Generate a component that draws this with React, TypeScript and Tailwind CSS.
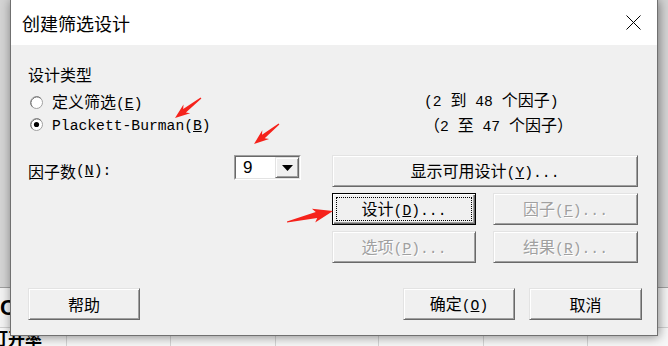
import React from "react";

function M({ children }: { children: React.ReactNode }) {
  return <span className="font-['Liberation_Mono',monospace] text-[14.7px]">{children}</span>;
}

function Btn({
  children,
  className = "",
  disabled = false,
  focused = false,
}: {
  children: React.ReactNode;
  className?: string;
  disabled?: boolean;
  focused?: boolean;
}) {
  const frame = focused
    ? "border border-black shadow-[inset_1px_1px_0_#ffffff,inset_-1px_-1px_0_#696969,inset_-2px_-2px_0_#a0a0a0]"
    : "border border-t-[#e3e3e3] border-l-[#e3e3e3] border-b-[#696969] border-r-[#696969] shadow-[inset_1px_1px_0_#ffffff,inset_-1px_-1px_0_#a0a0a0]";
  const txt = disabled ? "text-[#a0a0a0] [text-shadow:1px_1px_0_#ffffff]" : "text-black";
  return (
    <div className={`relative flex h-[32px] items-center justify-center bg-[#f0f0f0] leading-none ${frame} ${txt} ${className}`}>
      {focused && <div className="absolute inset-[3px] border border-dotted border-black" />}
      <span className="relative">{children}</span>
    </div>
  );
}

function Radio({ checked }: { checked: boolean }) {
  return (
    <svg width="13" height="13" viewBox="0 0 13 13" className="block h-[13px] w-[13px] shrink-0">
      <circle cx="6.5" cy="6.5" r="6" fill="#ffffff" stroke="#a0a0a0" strokeWidth="1" />
      <path d="M2.3 10.7 A6 6 0 0 1 10.7 2.3" fill="none" stroke="#6a6a6a" strokeWidth="1" />
      <circle cx="6.5" cy="6.5" r="4.6" fill="#ffffff" />
      {checked && <circle cx="6.5" cy="6.5" r="2.6" fill="#000000" />}
    </svg>
  );
}

function arrowPts(tx: number, ty: number, px: number, py: number, head: number, hw: number, nw: number) {
  const dx = px - tx;
  const dy = py - ty;
  const L = Math.hypot(dx, dy);
  const ux = dx / L;
  const uy = dy / L;
  const nx = -uy;
  const ny = ux;
  const bx = px - ux * head;
  const by = py - uy * head;
  const tw = 0.6;
  const p = (x: number, y: number) => `${x.toFixed(1)},${y.toFixed(1)}`;
  return [
    p(tx + nx * tw, ty + ny * tw),
    p(bx + nx * nw, by + ny * nw),
    p(bx - ux * 3 + nx * hw, by - uy * 3 + ny * hw),
    p(px, py),
    p(bx - ux * 3 - nx * hw, by - uy * 3 - ny * hw),
    p(bx - nx * nw, by - ny * nw),
    p(tx - nx * tw, ty - ny * tw),
  ].join(" ");
}

export default function App() {
  const gridX = [66, 170, 275, 378, 483, 587];
  return (
    <div className="relative h-[346px] w-[668px] overflow-hidden bg-[#d6d6d6] font-['Noto_Sans_CJK_SC',sans-serif]">
      {/* background sheet */}
      <div className="flex h-full flex-col">
        <div className="h-[295px] bg-[#d4d4d4]" />
        <div className="h-px bg-[#a0a0a0]" />
        <div className="h-[40px] bg-[#f3f3f3] pl-[0px] pt-[9px] font-['Liberation_Sans',sans-serif] text-[22px] font-bold leading-none text-black">
          C
        </div>
        <div className="relative flex-1 border-t border-[#d0d0d0] bg-[#f7f7f7]">
          {gridX.map((x) => (
            <div key={x} className="absolute top-0 bottom-0 w-px bg-[#d4d4d4]" style={{ left: x }} />
          ))}
          <div className="ml-[-9px] mt-[1px] text-[17px] font-bold leading-none text-black">打开率</div>
        </div>
      </div>

      {/* dialog window */}
      <div className="absolute left-[10px] top-[-1px] flex h-[337px] w-[648px] flex-col border border-[#707070] bg-[#f0f0f0] shadow-[1px_1px_10px_rgba(0,0,0,0.45)]">
        <div className="flex h-[45px] items-center justify-between bg-white pl-[11px] pr-[16px]">
          <span className="text-[18px] leading-none text-black">创建筛选设计</span>
          <svg width="15" height="15" viewBox="0 0 15 15">
            <path d="M0.5 0.5 L14.5 14.5 M14.5 0.5 L0.5 14.5" stroke="#000" strokeWidth="1" />
          </svg>
        </div>

        <div className="flex flex-1 flex-col bg-[#f0f0f0] pl-[17px] pt-[19px] text-[16px] text-black">
          {/* design type */}
          <div className="flex">
            <div className="w-[396px]">
              <div className="leading-[20px]">设计类型</div>
              <div className="mt-[7px] flex h-[22px] items-center gap-[9px] pl-[2px]">
                <Radio checked={false} />
                <span className="leading-none">
                  定义筛选<M>(<u>E</u>)</M>
                </span>
              </div>
              <div className="flex h-[22px] items-center gap-[9px] pl-[2px]">
                <Radio checked={true} />
                <span className="leading-none">
                  <M>Plackett-Burman(<u>B</u>)</M>
                </span>
              </div>
            </div>
            <div className="pt-[24px]">
              <div className="leading-[22px]">
                <M>(2 </M>到<M> 48 </M>个因子<M>)</M>
              </div>
              <div className="leading-[22px]">
                （<M>2 </M>至<M> 47 </M>个因子）
              </div>
            </div>
          </div>

          {/* factors */}
          <div className="mt-[17px] flex h-[32px]">
            <div className="flex w-[206px] items-center leading-none">
              因子数<M>(<u>N</u>):</M>
            </div>
            <div className="flex h-[25px] w-[67px] border border-t-[#a0a0a0] border-l-[#a0a0a0] border-b-white border-r-white">
              <div className="flex flex-1 border border-t-[#696969] border-l-[#696969] border-b-[#e3e3e3] border-r-[#e3e3e3] bg-white">
                <div className="flex flex-1 items-center pl-[7px] font-['Liberation_Sans',sans-serif] text-[17px] leading-none">9</div>
                <div className="flex w-[24px] items-center justify-center border border-t-[#e3e3e3] border-l-[#e3e3e3] border-b-[#696969] border-r-[#696969] bg-[#f0f0f0] shadow-[inset_1px_1px_0_#ffffff,inset_-1px_-1px_0_#a0a0a0]">
                  <svg width="11" height="6" viewBox="0 0 11 6">
                    <path d="M0 0 H11 L5.5 6 Z" fill="#000" />
                  </svg>
                </div>
              </div>
            </div>
            <Btn className="ml-[31px] w-[306px]">
              显示可用设计<M>(<u>Y</u>)...</M>
            </Btn>
          </div>

          <div className="mt-[6px] flex gap-[17px] pl-[304px]">
            <Btn focused className="w-[144px]">
              设计<M>(<u>D</u>)...</M>
            </Btn>
            <Btn disabled className="w-[145px]">
              因子<M>(<u>F</u>)...</M>
            </Btn>
          </div>
          <div className="mt-[6px] flex gap-[17px] pl-[304px]">
            <Btn disabled className="w-[144px]">
              选项<M>(<u>P</u>)...</M>
            </Btn>
            <Btn disabled className="w-[145px]">
              结果<M>(<u>R</u>)...</M>
            </Btn>
          </div>

          <div className="mt-[25px] flex">
            <Btn className="w-[112px]">帮助</Btn>
            <Btn className="ml-[263px] w-[112px]">
              确定<M>(<u>O</u>)</M>
            </Btn>
            <Btn className="ml-[14px] w-[113px]">取消</Btn>
          </div>
        </div>
      </div>

      {/* red annotation arrows */}
      <svg className="pointer-events-none absolute inset-0" width="668" height="346">
        <polygon points={arrowPts(201, 98, 175, 118, 12, 5.5, 2.2)} fill="#f5221b" />
        <polygon points={arrowPts(279, 124, 254, 144, 12, 5.5, 2.2)} fill="#f5221b" />
        <polygon points={arrowPts(287, 222, 333, 211, 17, 7, 3)} fill="#f5221b" />
      </svg>
    </div>
  );
}
